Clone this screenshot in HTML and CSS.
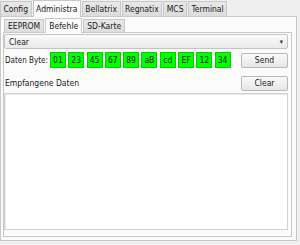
FILE: index.html
```html
<!DOCTYPE html>
<html>
<head>
<meta charset="utf-8">
<link rel="stylesheet" href="styles.css">
</head>
<body>
<div class="win">
  <div class="tabs outer">
    <div class="tab">Config</div>
    <div class="tab sel">Administra</div>
    <div class="tab">Bellatrix</div>
    <div class="tab">Regnatix</div>
    <div class="tab">MCS</div>
    <div class="tab">Terminal</div>
  </div>
  <div class="pane outerpane">
    <div class="tabs inner">
      <div class="tab">EEPROM</div>
      <div class="tab sel">Befehle</div>
      <div class="tab">SD-Karte</div>
    </div>
    <div class="pane innerpane">
      <div class="combo"><span>Clear</span><span class="arrow">▾</span></div>
      <div class="row bytes">
        <span class="lbl small">Daten Byte:</span>
        <div class="boxes">
          <span class="b">01</span><span class="b">23</span><span class="b">45</span><span class="b">67</span><span class="b">89</span><span class="b">aB</span><span class="b">cd</span><span class="b">EF</span><span class="b">12</span><span class="b">34</span>
        </div>
        <button class="btn">Send</button>
      </div>
      <div class="row recv">
        <span class="lbl">Empfangene Daten</span>
        <button class="btn">Clear</button>
      </div>
      <div class="text"></div>
    </div>
  </div>
</div>
</body>
</html>
```
FILE: styles.css
```css
* { box-sizing: border-box; }
html, body { margin: 0; padding: 0; }
body {
  background: #efefef;
  font-family: "DejaVu Sans Condensed", "DejaVu Sans", sans-serif;
  font-size: 8.5px;
  color: #1a1a1a;
  width: 300px;
  height: 245px;
  overflow: hidden;
}
.win { padding: 0 3px 4px 0; }
.tabs { display: flex; align-items: flex-end; }
.tab {
  border: 1px solid #c8c8c8;
  border-bottom: none;
  background: linear-gradient(#e8e8e8, #dcdcdc);
  padding: 0 2.5px;
  height: 15px;
  line-height: 14px;
  margin-right: 1px;
  white-space: nowrap;
}
.tab.sel {
  background: #fbfbfb;
  height: 17px;
  line-height: 16px;
  margin-bottom: -1px;
  position: relative;
  z-index: 1;
}
.outer { height: 16px; }
.outer .tab.sel { height: 17px; }
.pane {
  border: 1px solid #c8c8c8;
  background: #fbfbfb;
}
.outerpane {
  height: 225px;
  padding: 1px 4px 4px 2px;
}
.inner { height: 14px; padding-left: 1px; }
.inner .tab { height: 13px; line-height: 12px; padding: 0 3px; }
.inner .tab.sel { height: 15px; line-height: 15px; }
.innerpane {
  height: 205px;
  padding: 1px 3px 6px 0;
  display: flex;
  flex-direction: column;
}
.combo {
  height: 15px;
  border: 1px solid #c4c4c4;
  border-radius: 2px;
  background: linear-gradient(#fafafa, #e9e9e9);
  display: flex;
  justify-content: space-between;
  align-items: center;
  padding: 0 4px 0 4px;
}
.arrow { font-size: 7px; color: #333; }
.row { display: flex; align-items: center; }
.bytes { margin-top: 3px; height: 16px; padding-left: 1px; }
.lbl { white-space: nowrap; }
.lbl.small { font-size: 8px; }
.boxes { display: flex; gap: 2.3px; margin-left: 2px; }
.b {
  width: 16px;
  height: 16px;
  background: #00ff00;
  border: 1px solid #00d000;
  display: flex;
  align-items: center;
  justify-content: center;
}
.btn {
  margin-left: auto;
  width: 47px;
  height: 15px;
  padding: 0;
  border: 1px solid #b8b8b8;
  border-radius: 2px;
  background: linear-gradient(#fafafa, #e6e6e6);
  font-family: "DejaVu Sans Condensed", "DejaVu Sans", sans-serif;
  font-size: 8.5px;
  color: #1a1a1a;
}
.recv { margin-top: 7px; height: 16px; padding-left: 1px; }
.text {
  flex: 1;
  margin-top: 2px;
  border: 1px solid #d0d0d0;
  background: #ffffff;
  box-shadow: inset 1px 1px 0 #e8e8e8;
}
```
